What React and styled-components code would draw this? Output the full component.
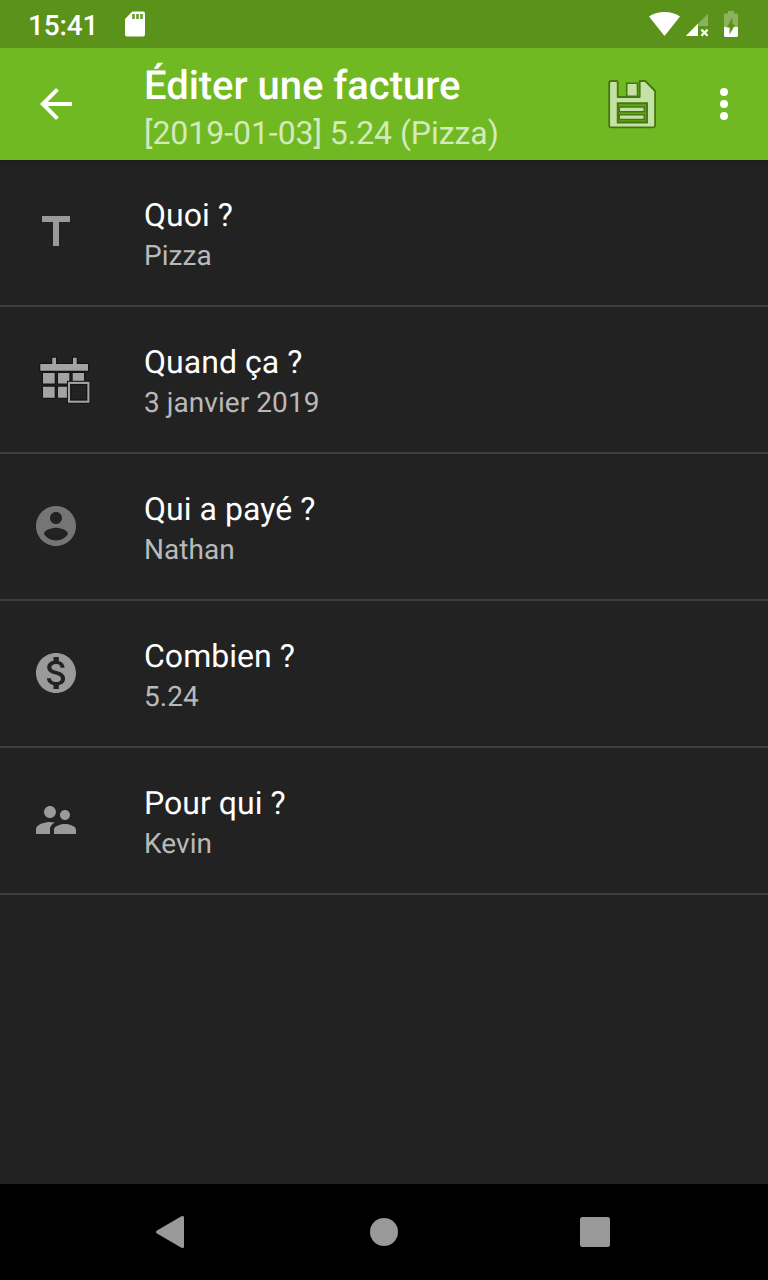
import React from "react";
import styled, { createGlobalStyle } from "styled-components";

const GlobalStyle = createGlobalStyle`
  * { box-sizing: border-box; }
  body {
    margin: 0;
    background: #222;
    font-family: Roboto, sans-serif;
    text-rendering: geometricPrecision;
  }
  svg { display: block; flex: none; }
`;

const Screen = styled.div`
  width: 768px;
  height: 1280px;
  display: flex;
  flex-direction: column;
  background: #222222;
  overflow: hidden;
`;

const StatusBar = styled.header`
  height: 48px;
  flex: none;
  display: flex;
  align-items: center;
  padding: 0 28px;
  background: #5a921a;
  color: #fff;
`;

const Clock = styled.span`
  width: 96px;
  padding-top: 4px;
  font-size: 28px;
  line-height: 34px;
  font-weight: 500;
  letter-spacing: -0.15px;
`;

const StatusIcons = styled.div`
  display: flex;
  margin-left: auto;
`;

const AppBar = styled.div`
  height: 112px;
  flex: none;
  display: flex;
  align-items: center;
  padding: 0 20px 0 32px;
  background: #70b922;
  box-shadow: 0 4px 4px rgba(0, 0, 0, 0.12);
`;

const IconButton = styled.button`
  display: flex;
  align-items: center;
  justify-content: center;
  width: ${(p) => p.$width}px;
  height: 96px;
  padding: 0;
  border: 0;
  background: none;
`;

const Heading = styled.div`
  flex: 1;
  height: 112px;
  margin-left: 64px;
  padding-top: 14px;
`;

const Title = styled.h1`
  margin: 0 0 4px;
  font-size: 40px;
  line-height: 48px;
  font-weight: 500;
  letter-spacing: -0.04px;
  color: #fff;
  white-space: nowrap;
`;

const Subtitle = styled.div`
  font-size: 32px;
  line-height: 38px;
  letter-spacing: -0.05px;
  color: #d4eabd;
  white-space: nowrap;
`;

const FieldList = styled.main`
  flex: 1;
`;

const FieldRow = styled.div`
  height: 147px;
  display: flex;
  border-bottom: 2px solid #3e3e3e;
`;

const FieldIcon = styled.div`
  width: 144px;
  padding: 48px 0 0 32px;
  color: ${(p) => p.$color};
`;

const FieldText = styled.div`
  padding-top: 36px;
`;

const Label = styled.div`
  margin-bottom: 6px;
  font-size: 32px;
  line-height: 38px;
  letter-spacing: 0.04px;
  color: #fff;
`;

const Value = styled.div`
  font-size: 28px;
  line-height: 32px;
  letter-spacing: 0.06px;
  color: #b9b9b9;
`;

const NavBar = styled.nav`
  height: 96px;
  flex: none;
  display: flex;
  align-items: center;
  justify-content: space-between;
  padding: 0 157px 0 154px;
  background: #000;
  color: #999;
`;

const MaterialIcon = ({ d }) => (
  <svg width="48" height="48" viewBox="0 0 24 24" fill="currentColor">
    <path d={d} />
  </svg>
);

const CalendarIcon = () => (
  <svg width="60" height="52" viewBox="32 355 60 52">
    <g fill="#a3a3a3" stroke="#151515" strokeWidth="2.4" paintOrder="stroke" strokeLinejoin="round">
      <path d="M52.3 357.8h3.7v6.2h17v-6.2h3.7v6.2h11.3v6.7H40.3V364h12z" />
      <path d="M43 373h11.7v10.5H43zM58 373h11.3v10.5H58zM72.7 373h11.3v10.5H72.7zM43 386.7h11.7v11H43zM58 386.7h11.3v11H58z" />
    </g>
    <rect x="69" y="382.9" width="19.4" height="18.8" fill="#222" stroke="#151515" strokeWidth="4.2" />
    <rect x="70.5" y="384.4" width="16.4" height="15.8" fill="none" stroke="#151515" strokeWidth="1.4" />
    <rect x="69" y="382.9" width="19.4" height="18.8" fill="none" stroke="#a3a3a3" strokeWidth="2.1" />
  </svg>
);

const SdCardIcon = () => (
  <svg width="22" height="26" viewBox="124 11 22 26">
    <path fill="#fff" d="M132.3 11.5H143a2 2 0 0 1 2 2v21a2 2 0 0 1-2 2h-16a2 2 0 0 1-2-2V19z" />
    <path fill="#699b31" d="M132.2 14h2.6v5h-2.6zM136.2 14h2.6v5h-2.6zM140.2 14h2.6v5h-2.6z" />
  </svg>
);

const ConnectivityIcons = () => (
  <svg width="92" height="28" viewBox="648 10 92 28">
    <path fill="#fff" d="M649 16.6C653 13.6 658.4 12 664.5 12S676 13.6 680 16.6L665.3 35a1 1 0 0 1-1.6 0z" />
    <path fill="#8bb35f" d="M708 13.8V26h-10v-2.2z" />
    <path fill="#fff" d="M685.8 36 698 23.6V36z" />
    <path stroke="#fff" strokeWidth="2.2" d="m701.4 29.6 6.2 6.2m0-6.2-6.2 6.2" />
    <path fill="#8bb35f" d="M728 11h6v2.5h2.6a1.4 1.4 0 0 1 1.4 1.4V27h-14V14.9a1.4 1.4 0 0 1 1.4-1.4h2.6z" />
    <path fill="#fff" d="M724 27h14v8.6a1.4 1.4 0 0 1-1.4 1.4h-11.2a1.4 1.4 0 0 1-1.4-1.4z" />
    <path fill="#5a921a" d="M729.6 34.4v-7h-2.8l5.6-9.9v7h2.8z" />
  </svg>
);

const SaveIcon = () => (
  <svg width="50" height="50" viewBox="607 79 50 50">
    <path
      fill="#c5e2a5"
      stroke="#447611"
      strokeWidth="1.8"
      strokeLinejoin="round"
      d="M611 81h5.2a1.5 1.5 0 0 1 1.5 1.5V97h22V81h5.6l9.8 10v34.6a1.8 1.8 0 0 1-1.8 1.8H611a1.8 1.8 0 0 1-1.8-1.8V82.8A1.8 1.8 0 0 1 611 81z"
    />
    <path fill="#c5e2a5" stroke="#447611" strokeWidth="1.6" d="M626.7 83.3h10.8v12.9h-10.8z" />
    <path fill="#60aa12" stroke="#447611" strokeWidth="1.9" d="M617.7 103.2H647v19.3h-29.3z" />
    <path fill="#c5e2a5" stroke="#447611" strokeWidth="1.5" d="M619.3 107h25v4.8h-25zM619.3 114.7h25v4.8h-25z" />
  </svg>
);

const fields = [
  { label: "Quoi ?", value: "Pizza", color: "#9a9a9a", icon: "M5 4v3h5.5v12h3V7H19V4z" },
  { label: "Quand ça ?", value: "3 janvier 2019", color: "#a3a3a3" },
  {
    label: "Qui a payé ?",
    value: "Nathan",
    color: "#757575",
    icon: "M12 2C6.48 2 2 6.48 2 12s4.48 10 10 10 10-4.48 10-10S17.52 2 12 2zm0 3c1.66 0 3 1.34 3 3s-1.34 3-3 3-3-1.34-3-3 1.34-3 3-3zm0 14.2c-2.5 0-4.71-1.28-6-3.22.03-1.99 4-3.08 6-3.08 1.99 0 5.97 1.09 6 3.08-1.29 1.94-3.5 3.22-6 3.22z",
  },
  {
    label: "Combien ?",
    value: "5.24",
    color: "#9a9a9a",
    icon: "M12 2C6.48 2 2 6.48 2 12s4.48 10 10 10 10-4.48 10-10S17.52 2 12 2zm1.41 16.09V20h-2.67v-1.93c-1.71-.36-3.16-1.46-3.27-3.4h1.96c.1 1.05.82 1.87 2.65 1.87 1.96 0 2.4-.98 2.4-1.59 0-.83-.44-1.61-2.67-2.14-2.48-.6-4.18-1.62-4.18-3.67 0-1.72 1.39-2.84 3.11-3.21V4h2.67v1.95c1.86.45 2.79 1.86 2.85 3.39H14.3c-.05-1.11-.64-1.87-2.22-1.87-1.5 0-2.4.68-2.4 1.64 0 .84.65 1.39 2.67 1.91s4.18 1.39 4.18 3.91c-.01 1.83-1.38 2.83-3.12 3.16z",
  },
  {
    label: "Pour qui ?",
    value: "Kevin",
    color: "#9a9a9a",
    icon: "M16.5 12c1.38 0 2.49-1.12 2.49-2.5S17.88 7 16.5 7C15.12 7 14 8.12 14 9.5s1.12 2.5 2.5 2.5zM9 11c1.66 0 2.99-1.34 2.99-3S10.66 5 9 5C7.34 5 6 6.34 6 8s1.34 3 3 3zm7.5 3c-1.83 0-5.5.92-5.5 2.75V19h11v-2.25c0-1.83-3.67-2.75-5.5-2.75zM9 13c-2.33 0-7 1.17-7 3.5V19h7v-2.25c0-.85.33-2.34 2.37-3.47C10.5 13.1 9.66 13 9 13z",
  },
];

export default function App() {
  return (
    <Screen>
      <GlobalStyle />
      <StatusBar>
        <Clock>15:41</Clock>
        <SdCardIcon />
        <StatusIcons>
          <ConnectivityIcons />
        </StatusIcons>
      </StatusBar>
      <AppBar>
        <IconButton $width={48} aria-label="Retour">
          <svg width="48" height="48" viewBox="0 0 24 24" fill="#fff">
            <path d="M20 11H7.83l5.59-5.59L12 4l-8 8 8 8 1.41-1.41L7.83 13H20v-2z" />
          </svg>
        </IconButton>
        <Heading>
          <Title>Éditer une facture</Title>
          <Subtitle>[2019-01-03] 5.24 (Pizza)</Subtitle>
        </Heading>
        <IconButton $width={136} aria-label="Enregistrer">
          <SaveIcon />
        </IconButton>
        <IconButton $width={48} aria-label="Plus d'options">
          <svg width="48" height="48" viewBox="0 0 48 48" fill="#fff">
            <circle cx="24" cy="12" r="4" />
            <circle cx="24" cy="24" r="4" />
            <circle cx="24" cy="36" r="4" />
          </svg>
        </IconButton>
      </AppBar>
      <FieldList>
        {fields.map((f) => (
          <FieldRow key={f.label}>
            <FieldIcon $color={f.color}>
              {f.icon ? <MaterialIcon d={f.icon} /> : <CalendarIcon />}
            </FieldIcon>
            <FieldText>
              <Label>{f.label}</Label>
              <Value>{f.value}</Value>
            </FieldText>
          </FieldRow>
        ))}
      </FieldList>
      <NavBar>
        <svg width="32" height="36" viewBox="154 1214 32 36" fill="currentColor">
          <path d="M157 1230.4 181.4 1216.3q2.6-1.2 2.6 1.2v29q0 2.4-2.6 1.2L157 1233.6q-2-1.6 0-3.2z" />
        </svg>
        <svg width="30" height="28" viewBox="0 0 30 28" fill="currentColor">
          <circle cx="16" cy="14" r="14" />
        </svg>
        <svg width="32" height="32" viewBox="0 0 32 32" fill="currentColor">
          <rect x="1" y="1" width="30" height="30" rx="2.5" />
        </svg>
      </NavBar>
    </Screen>
  );
}
